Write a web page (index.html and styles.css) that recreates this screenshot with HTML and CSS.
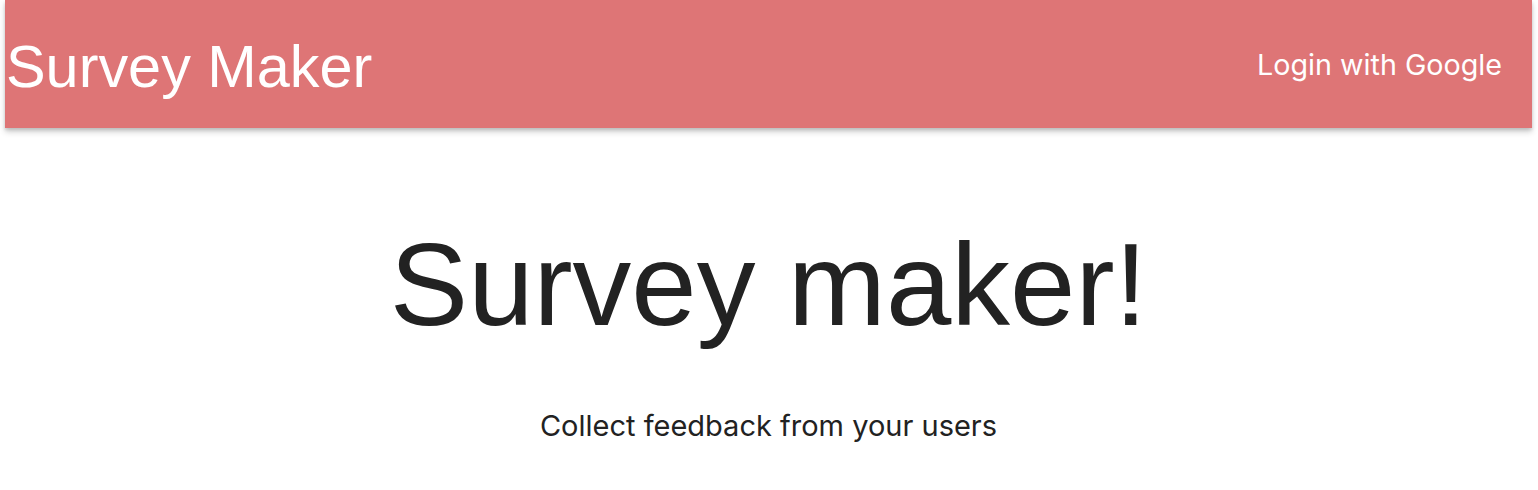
FILE: index.html
```html
<!DOCTYPE html>
<html>
<head>
<meta charset="utf-8">
<link rel="stylesheet" href="styles.css">
</head>
<body>
<div class="page">
  <nav class="nav">
    <a class="brand" href="#">Survey Maker</a>
    <a class="login" href="#">Login with Google</a>
  </nav>
  <main class="hero">
    <h1 class="title">Survey maker!</h1>
    <p class="subtitle">Collect feedback from your users</p>
  </main>
</div>
</body>
</html>
```
FILE: styles.css
```css
html, body {
  margin: 0;
  padding: 0;
  background: #ffffff;
}
.page {
  padding: 0 6px 0 5px;
}
.nav {
  height: 128px;
  background: #de7576;
  display: flex;
  align-items: center;
  justify-content: space-between;
  box-shadow: 0 4px 6px rgba(0,0,0,0.18), 0 2px 3px rgba(0,0,0,0.12);
}
.brand {
  font-family: "Liberation Sans", Arial, sans-serif;
  font-size: 59.4px;
  color: #ffffff;
  text-decoration: none;
  padding-left: 1px;
  margin-top: 4px;
}
.login {
  font-family: Inter, "Noto Sans", sans-serif;
  font-size: 28.7px;
  color: #ffffff;
  text-decoration: none;
  padding-right: 30px;
}
.hero {
  text-align: center;
  color: #222222;
}
.title {
  font-family: "Liberation Sans", Arial, sans-serif;
  font-weight: 400;
  font-size: 117.5px;
  margin: 86px 0 0;
  line-height: 1.2;
}
.subtitle {
  font-family: Inter, "Noto Sans", sans-serif;
  font-size: 29px;
  margin: 53px 0 0;
}
```
